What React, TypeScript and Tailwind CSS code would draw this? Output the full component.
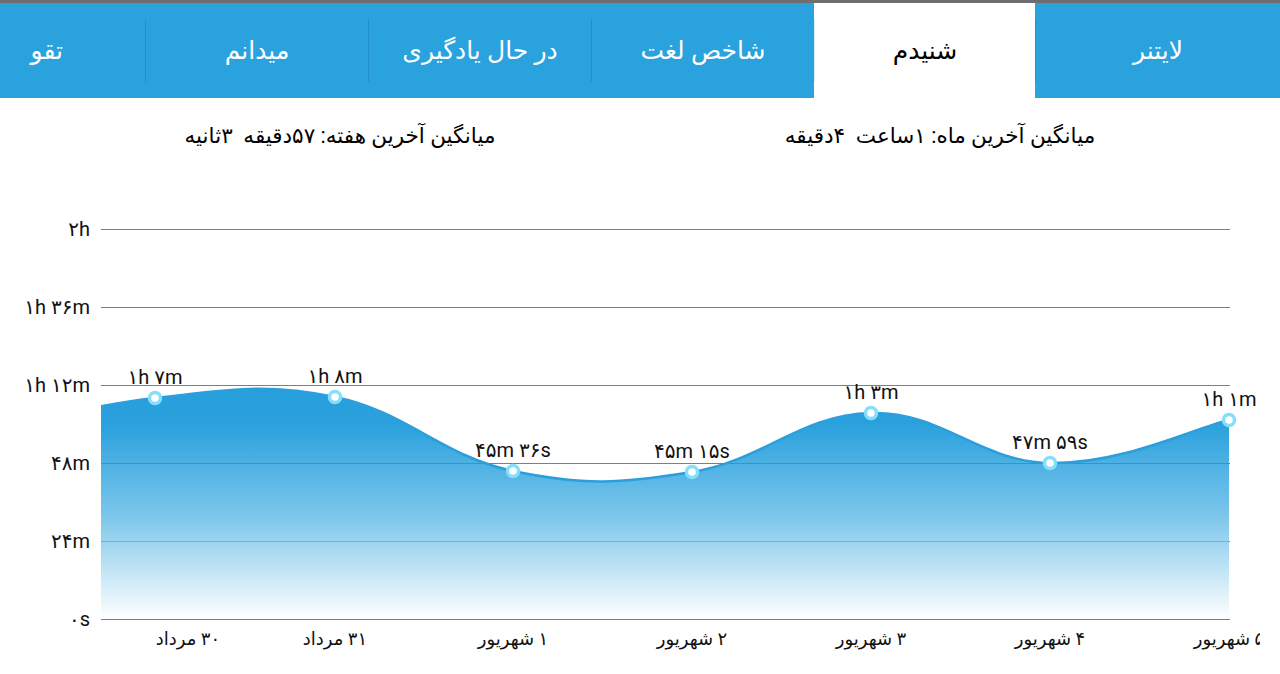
import React from "react";

const tabs = [
  { label: "لایتنر", w: "w-[245px]" },
  { label: "شنیدم", w: "w-[221px]", active: true },
  { label: "شاخص لغت", w: "w-[223px]" },
  { label: "در حال یادگیری", w: "w-[223px]" },
  { label: "میدانم", w: "w-[223px]" },
];

const yTicks = [
  { y: 229, label: "۲h" },
  { y: 307, label: "۱h ۳۶m" },
  { y: 385, label: "۱h ۱۲m" },
  { y: 463, label: "۴۸m" },
  { y: 541, label: "۲۴m" },
  { y: 619, label: "۰s" },
];

// first entry is the day before, scrolled out of view
const points: { x: number; y: number; value: string; day: string; dayX?: number }[] = [
  { x: -24, y: 436, value: "", day: "" },
  { x: 155, y: 398, value: "۱h ۷m", day: "۳۰ مرداد", dayX: 188 },
  { x: 335, y: 397, value: "۱h ۸m", day: "۳۱ مرداد" },
  { x: 513, y: 471, value: "۴۵m ۳۶s", day: "۱ شهریور" },
  { x: 692, y: 472, value: "۴۵m ۱۵s", day: "۲ شهریور" },
  { x: 871, y: 413, value: "۱h ۳m", day: "۳ شهریور" },
  { x: 1050, y: 463, value: "۴۷m ۵۹s", day: "۴ شهریور" },
  { x: 1229, y: 420, value: "۱h ۱m", day: "۵ شهریور" },
];

function curvePath(k = 0.2) {
  const n = points.length;
  let d = `M${points[0].x},${points[0].y}`;
  for (let i = 0; i < n - 1; i++) {
    const prev = points[Math.max(i - 1, 0)];
    const cur = points[i];
    const next = points[i + 1];
    const nn = points[Math.min(i + 2, n - 1)];
    const c1x = cur.x + (next.x - prev.x) * k;
    const c1y = cur.y + (next.y - prev.y) * k;
    const c2x = next.x - (nn.x - cur.x) * k;
    const c2y = next.y - (nn.y - cur.y) * k;
    d += ` C${c1x},${c1y} ${c2x},${c2y} ${next.x},${next.y}`;
  }
  return d;
}

const line = curvePath();
const area = `${line} L1229,619 L-24,619 Z`;

const Chart = () => (
  <svg
    width={1260}
    height={500}
    viewBox="0 174 1260 500"
    className="block font-['Roboto','DejaVu_Sans',sans-serif]"
  >
    <defs>
      <linearGradient id="fade" gradientUnits="userSpaceOnUse" x1="0" y1="390" x2="0" y2="619">
        <stop offset="0" stopColor="#279fdc" />
        <stop offset="0.15" stopColor="#2aa1dd" />
        <stop offset="0.55" stopColor="#7cc6eb" />
        <stop offset="1" stopColor="#ffffff" />
      </linearGradient>
      <clipPath id="plot">
        <rect x="101" y="174" width="1129" height="446" />
      </clipPath>
      <clipPath id="inside">
        <path d={area} />
      </clipPath>
    </defs>

    {/* grid */}
    {yTicks.map((t) => (
      <line key={t.y} x1={101} x2={1230} y1={t.y + 0.5} y2={t.y + 0.5} stroke="#7f7f7f" strokeWidth={1} />
    ))}

    <g clipPath="url(#plot)">
      <path d={area} fill="url(#fade)" />
      <g clipPath="url(#inside)">
        {yTicks.map((t) => (
          <line key={t.y} x1={101} x2={1230} y1={t.y + 0.5} y2={t.y + 0.5} stroke="rgba(0,40,80,0.22)" strokeWidth={1} />
        ))}
      </g>
      <path d={line} fill="none" stroke="#2b9fdc" strokeWidth={2.5} />
    </g>

    {/* y axis labels */}
    {yTicks.map((t) => (
      <text key={t.y} x={90} y={t.y} textAnchor="end" dominantBaseline="central" fontSize={20} fill="#111">
        {t.label}
      </text>
    ))}

    {/* points and values */}
    {points.slice(1).map((p) => (
      <g key={p.x}>
        <circle cx={p.x} cy={p.y} r={5.5} fill="#fff" stroke="#84defc" strokeWidth={3.5} />
        <text x={p.x} y={p.y - 21} textAnchor="middle" dominantBaseline="central" fontSize={20} fill="#111">
          {p.value}
        </text>
        <text
          x={p.dayX ?? p.x}
          y={638}
          textAnchor="middle"
          dominantBaseline="central"
          direction="rtl"
          fontSize={18}
          fill="#111"
        >
          {p.day}
        </text>
      </g>
    ))}
  </svg>
);

const App = () => {
  return (
    <div className="w-[1280px] h-[674px] overflow-hidden bg-white font-['Roboto','DejaVu_Sans',sans-serif]">
      <div className="h-[3px] bg-[#6e6e6e]" />

      {/* tabs */}
      <div dir="rtl" className="flex h-[95px] bg-[#29a2de] overflow-hidden">
        {tabs.map((t) => (
          <div
            key={t.label}
            className={`${t.w} shrink-0 flex items-center ${t.active ? "bg-white text-black" : "text-white"}`}
          >
            <span className="flex-1 text-center text-[25px]">{t.label}</span>
            <div className={`w-px h-[63px] ${t.active ? "bg-[#d6ecf8]" : "bg-[#2390c9]"}`} />
          </div>
        ))}
        <div className="flex-1 flex items-center pr-[82px] text-white text-[25px]">تقو</div>
      </div>

      {/* averages */}
      <div dir="rtl" className="grid grid-cols-2 px-10 h-[76px] items-center text-[21.5px] text-black">
        <div className="text-center whitespace-pre">میانگین آخرین ماه: ۱ساعت  ۴دقیقه</div>
        <div className="text-center whitespace-pre">میانگین آخرین هفته: ۵۷دقیقه  ۳ثانیه</div>
      </div>

      <Chart />
    </div>
  );
};

export default App;
